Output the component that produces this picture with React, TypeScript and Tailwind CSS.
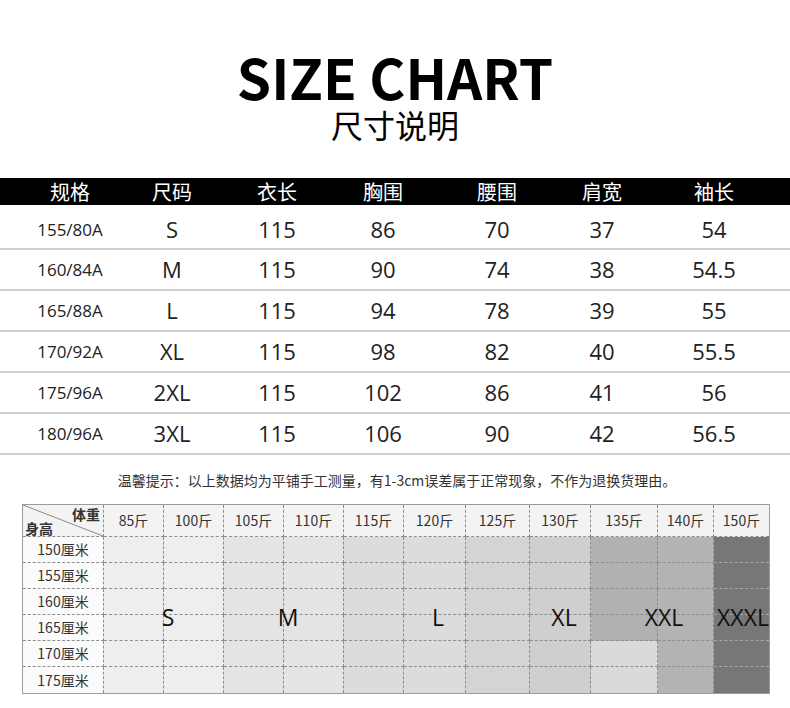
import React from 'react'

const cjk = { fontFamily: '"Noto Sans CJK SC", sans-serif' }

const headers = ['规格', '尺码', '衣长', '胸围', '腰围', '肩宽', '袖长']

const rows = [
  ['155/80A', 'S', '115', '86', '70', '37', '54'],
  ['160/84A', 'M', '115', '90', '74', '38', '54.5'],
  ['165/88A', 'L', '115', '94', '78', '39', '55'],
  ['170/92A', 'XL', '115', '98', '82', '40', '55.5'],
  ['175/96A', '2XL', '115', '102', '86', '41', '56'],
  ['180/96A', '3XL', '115', '106', '90', '42', '56.5'],
]

const weights = ['85斤', '100斤', '105斤', '110斤', '115斤', '120斤', '125斤', '130斤', '135斤', '140斤', '150斤']
const heights = ['150厘米', '155厘米', '160厘米', '165厘米', '170厘米', '175厘米']

// background per weight column, row index decides the 135 column
function cellBg(col: number, row: number) {
  if (col <= 1) return 'bg-[#eeeeee]'
  if (col <= 3) return 'bg-[#e4e4e4]'
  if (col <= 5) return 'bg-[#dcdcdc]'
  if (col === 6) return 'bg-[#d4d4d4]'
  if (col === 7) return 'bg-[#cfcfcf]'
  if (col === 8) return row < 4 ? 'bg-[#b1b1b1]' : 'bg-[#dadada]'
  if (col === 9) return 'bg-[#b3b3b3]'
  return 'bg-[#777777]'
}

const sizeLabels = [
  { t: 'S', x: 'left-[145px]' },
  { t: 'M', x: 'left-[265px]' },
  { t: 'L', x: 'left-[415px]' },
  { t: 'XL', x: 'left-[541px]' },
  { t: 'XXL', x: 'left-[641px]' },
  { t: 'XXXL', x: 'left-[720px]' },
]

export default function App() {
  return (
    <div className="w-[790px] h-[708px] bg-white overflow-hidden text-[#222]">
      {/* title */}
      <div className="pt-[50px] flex flex-col items-center">
        <div className="text-[55px] leading-[52px] font-bold text-black" style={cjk}>SIZE CHART</div>
        <div className="mt-[6px] text-[32px] leading-[32px] text-black" style={cjk}>尺寸说明</div>
      </div>

      {/* size table */}
      <div className="mt-[38px] h-[27px] bg-black pl-[18px] grid grid-cols-[104px_100px_110px_102px_126px_84px_140px]">
        {headers.map((h) => (
          <div key={h} className="flex items-center justify-center text-white text-[20px] leading-none" style={cjk}>{h}</div>
        ))}
      </div>
      {rows.map((r, i) => (
        <div
          key={r[0]}
          className={
            i === 0
              ? 'h-[45px] pt-[6px] border-b-2 border-[#d0d0d0] pl-[18px] grid grid-cols-[104px_100px_110px_102px_126px_84px_140px]'
              : 'h-[41px] border-b-2 border-[#d0d0d0] pl-[18px] grid grid-cols-[104px_100px_110px_102px_126px_84px_140px]'
          }
        >
          {r.map((v, j) => (
            <div
              key={j}
              className={j === 0 ? 'flex items-center justify-center text-[17px]' : 'flex items-center justify-center text-[22px]'}
              style={{ fontFamily: '"Open Sans", "Noto Sans CJK SC", sans-serif' }}
            >
              {v}
            </div>
          ))}
        </div>
      ))}

      {/* note */}
      <div className="mt-[15px] text-center text-[14px] leading-[20px] text-[#333] pl-[4px]" style={cjk}>
        温馨提示：以上数据均为平铺手工测量，有1-3cm误差属于正常现象，不作为退换货理由。
      </div>

      {/* weight / height grid */}
      <div className="relative mt-[14px] ml-[22px] w-[748px] grid grid-cols-[81px_60px_60px_60px_60px_60px_62px_64px_61px_67px_56px_55px] grid-rows-[32px_repeat(6,26px)] border border-[#9c9c9c] text-[#333]" style={cjk}>
        <div className="relative bg-[#f3f3f3] border-r border-b border-dashed border-[#8e8e8e]">
          <svg className="absolute inset-0" width="80" height="31">
            <line x1="0" y1="0" x2="80" y2="31" stroke="#8a8a8a" strokeWidth="1" />
          </svg>
          <span className="absolute right-[3px] top-[1px] text-[14px] leading-[16px] font-bold">体重</span>
          <span className="absolute left-[2px] bottom-[0px] text-[14px] leading-[16px] font-bold">身高</span>
        </div>
        {weights.map((w, i) => (
          <div
            key={w}
            className={
              i === 10
                ? 'bg-[#f3f3f3] border-b border-dashed border-[#8e8e8e] flex items-center justify-center text-[14px]'
                : 'bg-[#f3f3f3] border-r border-b border-dashed border-[#8e8e8e] flex items-center justify-center text-[14px]'
            }
          >
            {w}
          </div>
        ))}
        {heights.map((h, r) => (
          <React.Fragment key={h}>
            <div
              className={
                r === 5
                  ? 'bg-[#fbfbfb] border-r border-dashed border-[#8e8e8e] flex items-center justify-center text-[14px]'
                  : 'bg-[#fbfbfb] border-r border-b border-dashed border-[#8e8e8e] flex items-center justify-center text-[14px]'
              }
            >
              {h}
            </div>
            {weights.map((w, c) => (
              <div
                key={w}
                className={[
                  cellBg(c, r),
                  'border-dashed',
                  c === 10 ? 'border-[#a8a8a8]' : 'border-[#8e8e8e]',
                  c === 10 ? '' : 'border-r',
                  r === 5 ? '' : 'border-b',
                ].join(' ')}
              />
            ))}
          </React.Fragment>
        ))}
        {sizeLabels.map((s) => (
          <span
            key={s.t}
            className={'absolute top-[112px] -translate-x-1/2 -translate-y-1/2 text-[23px] leading-none text-[#111] ' + s.x}
            style={{ fontFamily: '"Open Sans", sans-serif' }}
          >
            {s.t}
          </span>
        ))}
      </div>
    </div>
  )
}
